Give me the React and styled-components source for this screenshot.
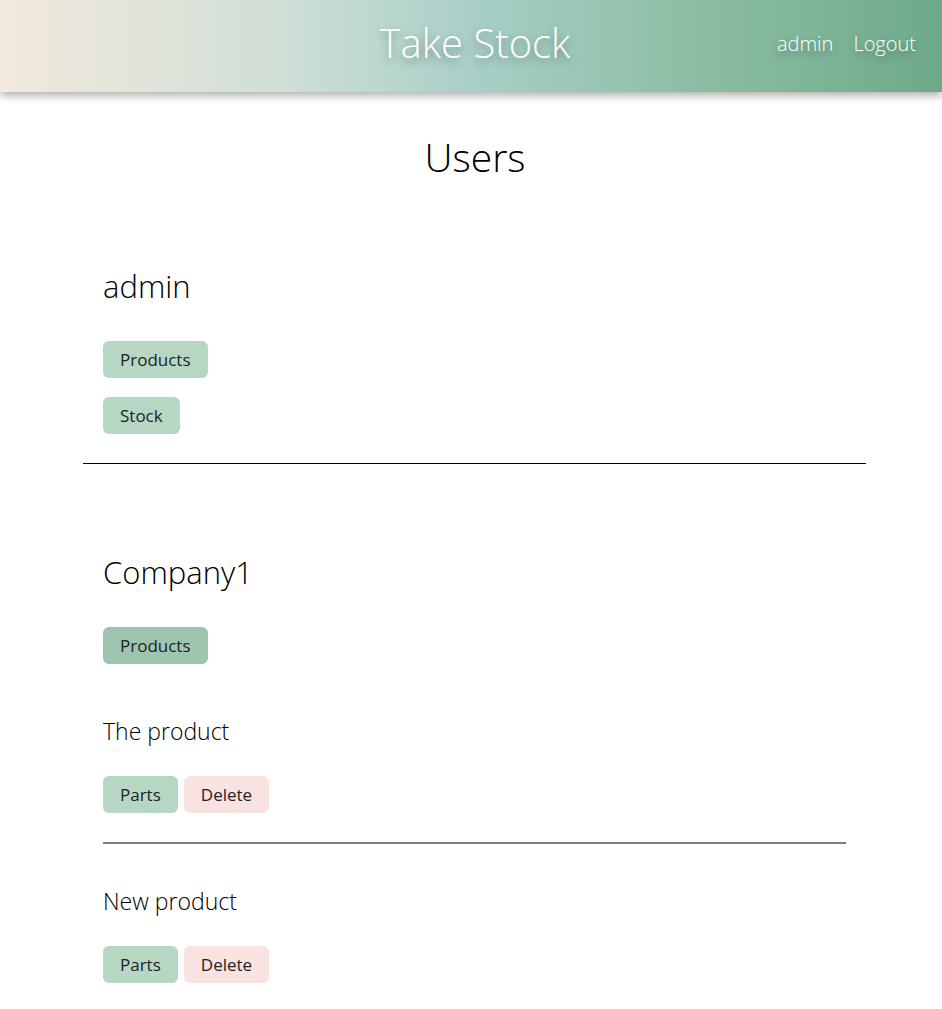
import React from 'react'
import styled, { createGlobalStyle } from 'styled-components'

const GlobalStyle = createGlobalStyle`
  body {
    margin: 0;
    background: #fff;
    font-family: 'Open Sans', 'Noto Sans', sans-serif;
    font-weight: 300;
    color: #000;
  }
`

const Header = styled.header`
  height: 92px;
  box-sizing: border-box;
  display: grid;
  grid-template-columns: 1fr auto 1fr;
  align-items: center;
  padding: 0 26px 8px 34px;
  background: linear-gradient(to right, #f3e9dd 0%, #cfdfd6 30%, #a9cfc8 50%, #8fbfa6 72%, #6daa89 100%);
  box-shadow: 0 4px 8px rgba(0, 0, 0, 0.3);
`

const Brand = styled.div`
  grid-column: 2;
  font-size: 40px;
  color: #fff;
  text-shadow: 0 4px 8px rgba(0, 0, 0, 0.35);
`

const Nav = styled.nav`
  grid-column: 3;
  justify-self: end;
  display: flex;
  gap: 20px;
  font-size: 20px;
  color: #fff;
  text-shadow: 0 4px 8px rgba(0, 0, 0, 0.35);
  margin-top: 2px;
`

const Title = styled.h1`
  margin: 41px 0 0;
  text-align: center;
  font-size: 39px;
  line-height: 48px;
  font-weight: 300;
  padding-left: 8px;
`

const Container = styled.main`
  width: 783px;
  margin: 0 0 0 83px;
`

const User = styled.section`
  padding: 0 20px;
  margin-top: ${p => p.top}px;
`

const UserName = styled.h2`
  margin: 0;
  font-size: 31px;
  line-height: 40px;
  font-weight: 300;
`

const Stack = styled.div`
  display: flex;
  flex-direction: ${p => (p.row ? 'row' : 'column')};
  align-items: flex-start;
  gap: ${p => (p.row ? 6 : 19)}px;
  margin-top: ${p => p.top}px;
`

const Button = styled.button`
  height: 37px;
  padding: 0 17px;
  border: none;
  border-radius: 6px;
  font-family: inherit;
  font-weight: 400;
  font-size: 17px;
  color: #222;
  background: ${p => (p.variant === 'danger' ? '#f8e2e2' : p.variant === 'active' ? '#9dc5af' : '#b7d7c5')};
  cursor: pointer;
`

const Rule = styled.hr`
  margin: 29px 0 0;
  border: none;
  border-top: 1px solid #000;
`

const Product = styled.div`
  margin-top: ${p => p.top}px;
`

const ProductName = styled.h3`
  margin: 0;
  font-size: 23px;
  line-height: 30px;
  font-weight: 300;
`

const ProductRule = styled.hr`
  margin: 29px 0 0;
  border: none;
  border-top: 2px solid #808080;
`

const products = ['The product', 'New product']

export default function App() {
  return (
    <>
      <GlobalStyle />
      <Header>
        <Brand>Take Stock</Brand>
        <Nav>
          <span>admin</span>
          <span>Logout</span>
        </Nav>
      </Header>
      <Title>Users</Title>
      <Container>
        <User top={85}>
          <UserName>admin</UserName>
          <Stack top={35}>
            <Button>Products</Button>
            <Button>Stock</Button>
          </Stack>
        </User>
        <Rule />
        <User top={88}>
          <UserName>Company1</UserName>
          <Stack top={35}>
            <Button variant="active">Products</Button>
          </Stack>
          {products.map((name, i) => (
            <Product key={name} top={i === 0 ? 52 : 42}>
              <ProductName>{name}</ProductName>
              <Stack row top={30}>
                <Button>Parts</Button>
                <Button variant="danger">Delete</Button>
              </Stack>
              {i === 0 && <ProductRule />}
            </Product>
          ))}
        </User>
      </Container>
    </>
  )
}
